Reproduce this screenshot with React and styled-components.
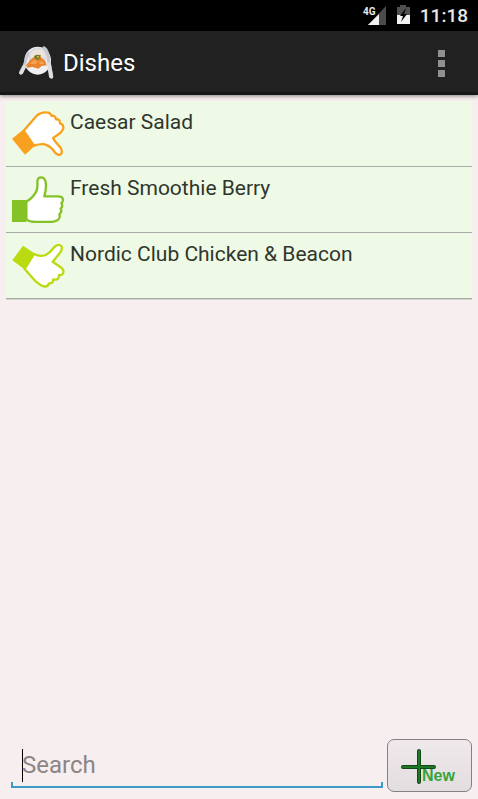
import React, { useState } from 'react';
import styled, { createGlobalStyle } from 'styled-components';

const GlobalStyle = createGlobalStyle`
  * {
    box-sizing: border-box;
  }
  body {
    margin: 0;
    background: #f7eeef;
    font-family: Roboto, 'Liberation Sans', sans-serif;
  }
`;

const Page = styled.div`
  display: flex;
  flex-direction: column;
  min-height: 100vh;
`;

const StatusBar = styled.div`
  display: flex;
  align-items: center;
  justify-content: flex-end;
  height: 31px;
  padding-right: 10px;
  background: #000;
  color: #e8e8e8;
`;

const StatusIcon = styled.svg`
  display: block;
  width: ${(props) => props.$width}px;
  height: 24px;
  margin-right: 8px;
`;

const Clock = styled.span`
  font-size: 19px;
  font-weight: 500;
  line-height: 24px;
`;

const AppBar = styled.header`
  display: flex;
  align-items: center;
  height: 64px;
  padding: 0 21px 0 16px;
  background: #212121;
  box-shadow: inset 0 -3px #171717, 0 1px 4px rgba(0, 0, 0, 0.45);
  color: #fff;
`;

const Logo = styled.svg`
  width: 40px;
  height: 40px;
`;

const Title = styled.h1`
  flex: 1;
  margin: 0 0 0 7px;
  font-size: 24px;
  font-weight: 400;
  line-height: 32px;
`;

const MenuButton = styled.button`
  display: flex;
  flex-direction: column;
  align-items: center;
  gap: 3px;
  width: 32px;
  padding: 0;
  border: 0;
  background: none;
`;

const MenuDot = styled.span`
  width: 7px;
  height: 7px;
  background: #909090;
`;

const DishList = styled.ul`
  flex: 1;
  margin: 0;
  padding: 6px 6px 0;
  list-style: none;
`;

const DishRow = styled.li`
  display: flex;
  gap: 5px;
  height: 66px;
  padding: 8px 5px;
  background: #eefae5;
  border-bottom: 1px solid #aaa;
  box-shadow: 0 1px #d3d6cf;
  position: relative;
`;

const RatingIcon = styled.svg`
  flex: none;
  width: 54px;
  height: 48px;
`;

const DishName = styled.span`
  font-size: 21px;
  line-height: 26px;
  color: #2f362d;
`;

const BottomBar = styled.form`
  display: flex;
  align-items: flex-end;
  gap: 4px;
  padding: 0 6px 7px 11px;
`;

const SearchField = styled.label`
  flex: 1;
  display: flex;
  align-items: center;
  height: 40px;
  margin-bottom: 4px;
  padding: 0 11px 6px;
  background: linear-gradient(#3b9ac9, #3b9ac9) 0 100% / 2px 6px no-repeat,
    linear-gradient(#3b9ac9, #3b9ac9) 100% 100% / 2px 6px no-repeat,
    linear-gradient(#3b9ac9, #3b9ac9) 0 100% / 100% 2px no-repeat;
`;

const Caret = styled.span`
  width: 1px;
  height: 33px;
  margin-right: -1px;
  background: #000;
`;

const SearchInput = styled.input`
  flex: 1;
  min-width: 0;
  padding: 0;
  border: 0;
  outline: 0;
  background: none;
  font-family: inherit;
  font-size: 24px;
  line-height: 32px;
  color: #222;
  &::placeholder {
    color: #8b8586;
    opacity: 1;
  }
`;

const NewButton = styled.button`
  position: relative;
  width: 85px;
  height: 53px;
  padding: 0;
  border: 1px solid #858082;
  border-radius: 7px;
  background: linear-gradient(#f0e9eb, #e2dddf);
`;

const PlusIcon = styled.svg`
  position: absolute;
  left: 12px;
  top: 8px;
  width: 36px;
  height: 36px;
`;

const NewLabel = styled.span`
  position: absolute;
  left: 34px;
  bottom: 6px;
  font-family: 'Liberation Sans', sans-serif;
  font-size: 16px;
  font-weight: 700;
  line-height: 18px;
  color: #35a339;
`;

const ratings = {
  bad: {
    color: '#f9a11f',
    viewBox: '33 33 162 144',
    cuff: 'M36 122L68 97L104 144L75 170Z',
    hand: 'M71 98L110 53Q122 42 139 43Q151 43 155 54Q165 50 168 64Q180 62 180 76Q191 79 190 91Q187 104 159 120Q164 130 181 148Q189 160 183 168Q174 175 164 162Q153 145 135 139Q119 137 102 143Z',
  },
  good: {
    color: '#84c225',
    viewBox: '33 27 162 144',
    cuff: 'M36 102H79V168H36Z',
    hand: 'M79 107Q95 99 107 80Q114 69 112 47Q113 34 124 34Q135 35 137 49Q140 66 133 91H174Q188 91 189 101Q189 108 184 111Q190 120 182 128Q187 138 178 145Q182 157 172 163Q164 168 148 168H106Q89 168 79 161Z',
  },
  fair: {
    color: '#bada12',
    viewBox: '33 21 162 144',
    cuff: 'M37 79L69 35L103 58L72 105Z',
    hand: 'M102 60Q119 69 137 63Q151 56 163 39Q176 28 184 36Q189 45 179 58L158 83L184 101Q194 110 188 120Q183 125 177 123Q177 137 166 137Q162 137 160 136Q159 150 147 148Q143 160 131 157Q121 154 108 143L74 105Z',
  },
};

const dishes = [
  { name: 'Caesar Salad', rating: 'bad' },
  { name: 'Fresh Smoothie Berry', rating: 'good' },
  { name: 'Nordic Club Chicken & Beacon', rating: 'fair' },
];

const Rating = ({ value }) => {
  const { color, viewBox, cuff, hand } = ratings[value];
  return (
    <RatingIcon viewBox={viewBox} aria-hidden="true">
      <path d={hand} fill="#fff" stroke={color} strokeWidth="7" strokeLinejoin="round" />
      <path d={cuff} fill={color} />
    </RatingIcon>
  );
};

const App = () => {
  const [query, setQuery] = useState('');
  const shown = dishes.filter((dish) =>
    dish.name.toLowerCase().includes(query.toLowerCase())
  );

  return (
    <Page>
      <GlobalStyle />
      <StatusBar>
        <StatusIcon $width={26} viewBox="0 0 26 24" aria-hidden="true">
          <path d="M25 2V21H7Z" fill="#4b4b4b" />
          <path d="M18 10V21H7Z" fill="#f2f2f2" />
          <text x="2" y="11" fill="#e8e8e8" fontSize="10" fontWeight="700">
            4G
          </text>
        </StatusIcon>
        <StatusIcon $width={17} viewBox="0 0 17 24" aria-hidden="true">
          <path d="M5 1H11V3H15V20H2V3H5Z" fill="#505050" />
          <path d="M2 11H15V20H2Z" fill="#f2f2f2" />
          <path d="M11 4L5 12H8L6 18L12 10H9Z" fill="#000" />
        </StatusIcon>
        <Clock>11:18</Clock>
      </StatusBar>
      <AppBar>
        <Logo viewBox="0 8 120 120" aria-hidden="true">
          <ellipse cx="65" cy="61" rx="40" ry="42" fill="#f1f1f3" />
          <path d="M36 40Q47 22 65 21Q83 21 94 40L88 62H39Z" fill="#d9dbe2" />
          <path d="M44 40L56 29L80 30L89 48L72 61L44 55Z" fill="#f1e3dc" />
          <path d="M30 75L43 58L58 47L74 50L88 62L92 75L77 77L67 85L49 80L34 82Z" fill="#e88430" />
          <path d="M40 70L54 59L66 63L58 72ZM68 65L80 63L85 71L72 72Z" fill="#f2a252" />
          <path d="M54 47L62 43L74 44L73 53L66 59L57 55Z" fill="#6b8028" />
          <path d="M62 48L68 46L70 51L65 54Z" fill="#d1b93a" />
          <path d="M36 38L18 96" stroke="#c5cad2" strokeWidth="8" strokeLinecap="round" />
          <path d="M24 80L15 97" stroke="#dcdee1" strokeWidth="12" strokeLinecap="round" />
          <path d="M84 23Q96 30 98 62L107 110" fill="none" stroke="#c5c8cd" strokeWidth="10" strokeLinecap="round" />
          <path d="M99 72L105 108" stroke="#dcdee1" strokeWidth="12" strokeLinecap="round" />
        </Logo>
        <Title>Dishes</Title>
        <MenuButton type="button" aria-label="More options">
          <MenuDot />
          <MenuDot />
          <MenuDot />
        </MenuButton>
      </AppBar>
      <DishList>
        {shown.map((dish) => (
          <DishRow key={dish.name}>
            <Rating value={dish.rating} />
            <DishName>{dish.name}</DishName>
          </DishRow>
        ))}
      </DishList>
      <BottomBar onSubmit={(e) => e.preventDefault()}>
        <SearchField>
          {query === '' && <Caret />}
          <SearchInput
            type="text"
            aria-label="Search"
            placeholder="Search"
            value={query}
            onChange={(e) => setQuery(e.target.value)}
          />
        </SearchField>
        <NewButton type="button">
          <PlusIcon viewBox="0 0 36 36" aria-hidden="true">
            <path d="M19 3V34M3 19H34" stroke="#124a17" strokeWidth="4" strokeLinecap="round" />
            <path d="M19 3V34M3 19H34" stroke="#1c7a24" strokeWidth="2" strokeLinecap="round" />
          </PlusIcon>
          <NewLabel>New</NewLabel>
        </NewButton>
      </BottomBar>
    </Page>
  );
};

export default App;
